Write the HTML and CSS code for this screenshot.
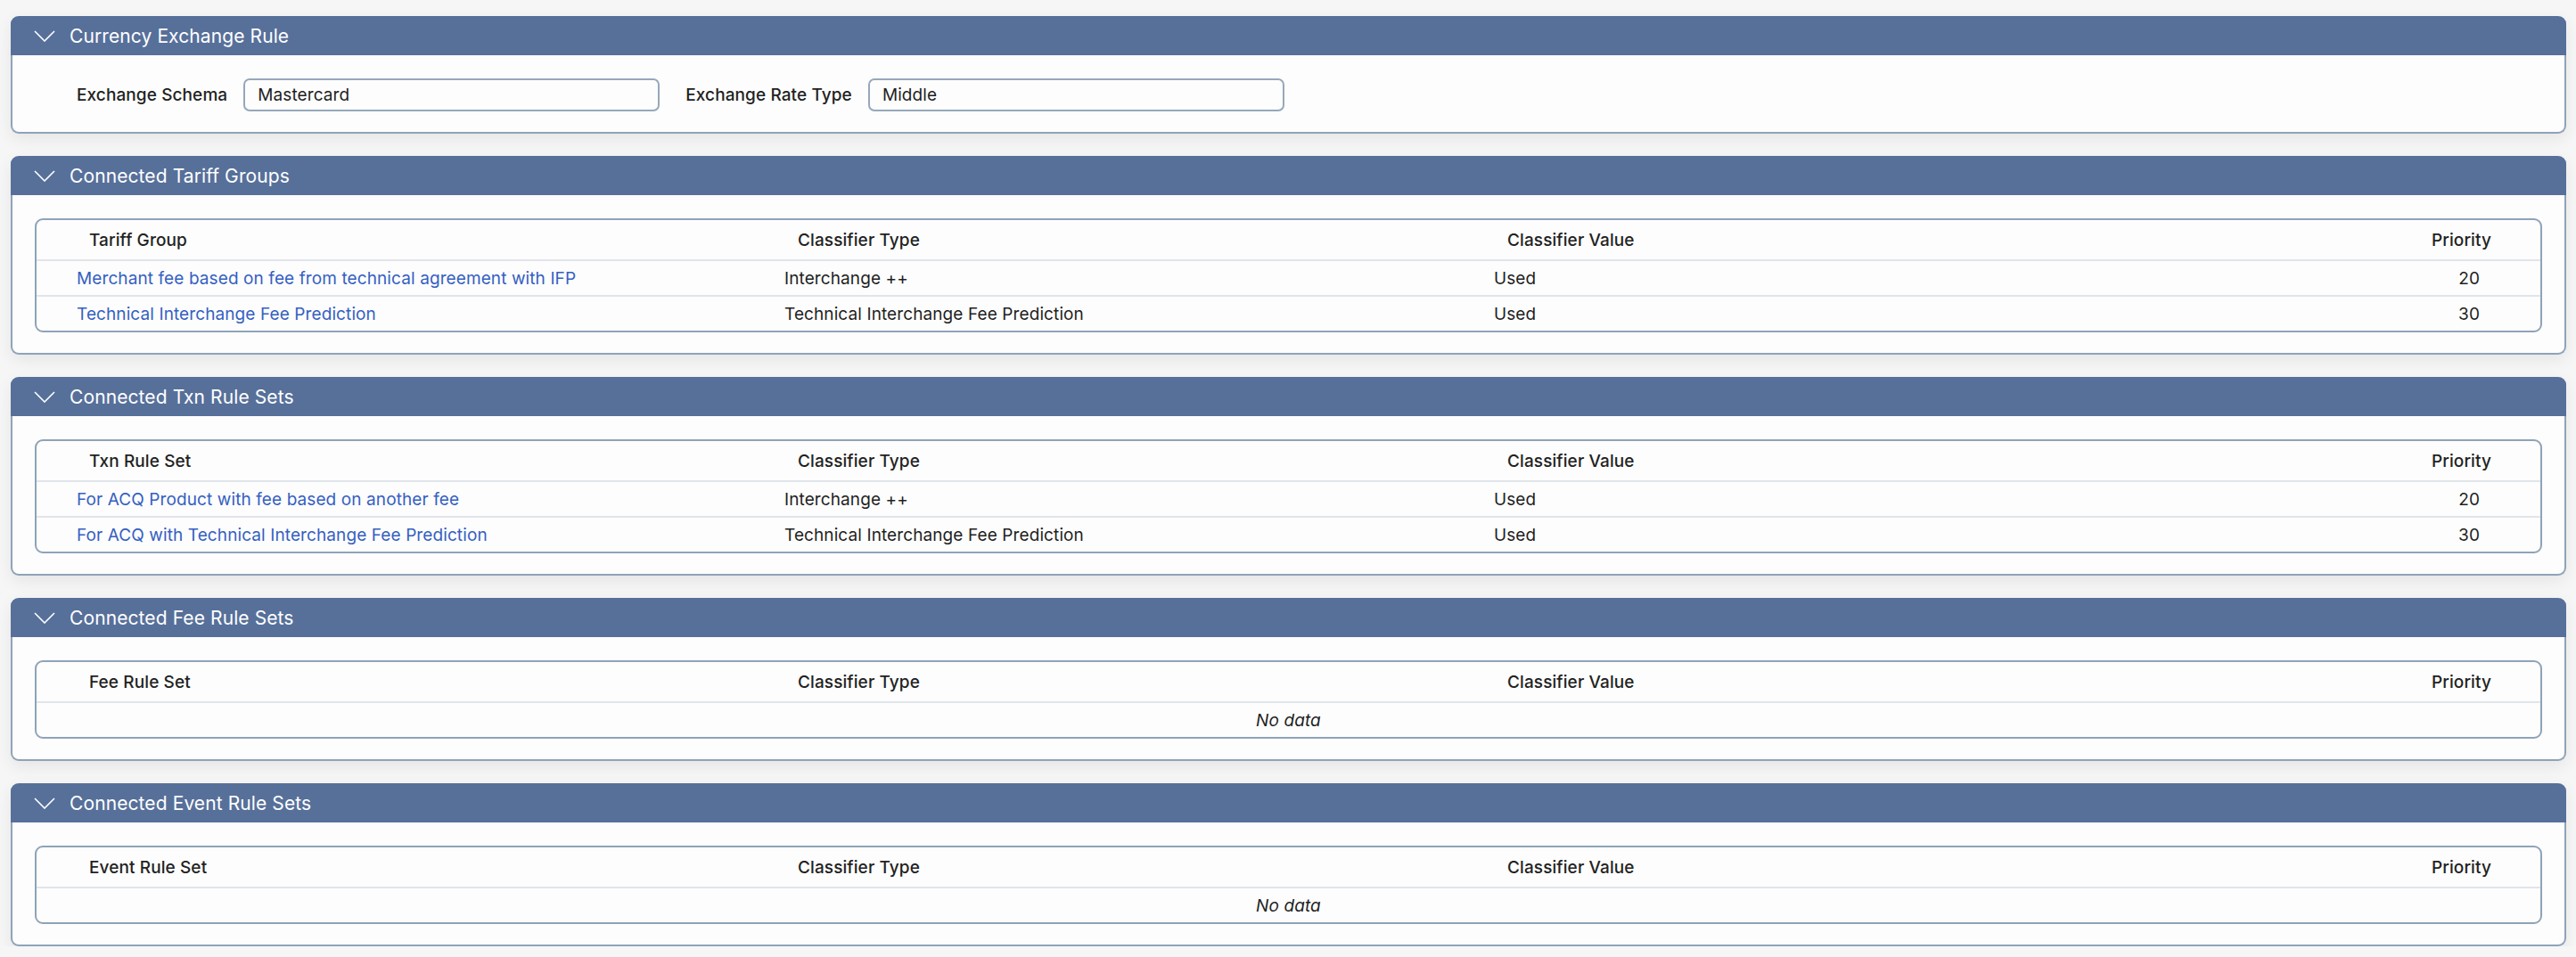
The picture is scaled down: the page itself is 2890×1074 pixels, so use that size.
FILE: index.html
```html
<!DOCTYPE html>
<html lang="en">
  <head>
    <meta charset="UTF-8" />
    <meta name="viewport" content="width=device-width, initial-scale=1.0" />
    <title>Exchange rule</title>
    <link rel="stylesheet" href="styles.css">
  </head>
  <body>
    <main>
      <section class="panel">
        <header class="panel-head">
          <svg class="chevron" viewBox="0 0 24 13"><polyline points="1,1 12,12 23,1" /></svg>
          <span>Currency Exchange Rule</span>
        </header>
        <div class="panel-body">
          <div class="form-row">
            <div class="field">
              <label for="schema">Exchange Schema</label>
              <input type="text" id="schema" value="Mastercard" />
            </div>
            <div class="field">
              <label for="rate">Exchange Rate Type</label>
              <input type="text" id="rate" value="Middle" />
            </div>
          </div>
        </div>
      </section>

      <section class="panel">
        <header class="panel-head">
          <svg class="chevron" viewBox="0 0 24 13"><polyline points="1,1 12,12 23,1" /></svg>
          <span>Connected Tariff Groups</span>
        </header>
        <div class="panel-body">
          <div class="grid">
            <table>
              <thead>
                <tr>
                  <th>Tariff Group</th>
                  <th>Classifier Type</th>
                  <th>Classifier Value</th>
                  <th class="num">Priority</th>
                </tr>
              </thead>
              <tbody>
                <tr>
                  <td><a href="#">Merchant fee based on fee from technical agreement with IFP</a></td>
                  <td>Interchange ++</td>
                  <td>Used</td>
                  <td class="num">20</td>
                </tr>
                <tr>
                  <td><a href="#">Technical Interchange Fee Prediction</a></td>
                  <td>Technical Interchange Fee Prediction</td>
                  <td>Used</td>
                  <td class="num">30</td>
                </tr>
              </tbody>
            </table>
          </div>
        </div>
      </section>

      <section class="panel">
        <header class="panel-head">
          <svg class="chevron" viewBox="0 0 24 13"><polyline points="1,1 12,12 23,1" /></svg>
          <span>Connected Txn Rule Sets</span>
        </header>
        <div class="panel-body">
          <div class="grid">
            <table>
              <thead>
                <tr>
                  <th>Txn Rule Set</th>
                  <th>Classifier Type</th>
                  <th>Classifier Value</th>
                  <th class="num">Priority</th>
                </tr>
              </thead>
              <tbody>
                <tr>
                  <td><a href="#">For ACQ Product with fee based on another fee</a></td>
                  <td>Interchange ++</td>
                  <td>Used</td>
                  <td class="num">20</td>
                </tr>
                <tr>
                  <td><a href="#">For ACQ with Technical Interchange Fee Prediction</a></td>
                  <td>Technical Interchange Fee Prediction</td>
                  <td>Used</td>
                  <td class="num">30</td>
                </tr>
              </tbody>
            </table>
          </div>
        </div>
      </section>

      <section class="panel">
        <header class="panel-head">
          <svg class="chevron" viewBox="0 0 24 13"><polyline points="1,1 12,12 23,1" /></svg>
          <span>Connected Fee Rule Sets</span>
        </header>
        <div class="panel-body">
          <div class="grid">
            <table>
              <thead>
                <tr>
                  <th>Fee Rule Set</th>
                  <th>Classifier Type</th>
                  <th>Classifier Value</th>
                  <th class="num">Priority</th>
                </tr>
              </thead>
              <tbody>
                <tr>
                  <td class="empty" colspan="4">No data</td>
                </tr>
              </tbody>
            </table>
          </div>
        </div>
      </section>

      <section class="panel">
        <header class="panel-head">
          <svg class="chevron" viewBox="0 0 24 13"><polyline points="1,1 12,12 23,1" /></svg>
          <span>Connected Event Rule Sets</span>
        </header>
        <div class="panel-body">
          <div class="grid">
            <table>
              <thead>
                <tr>
                  <th>Event Rule Set</th>
                  <th>Classifier Type</th>
                  <th>Classifier Value</th>
                  <th class="num">Priority</th>
                </tr>
              </thead>
              <tbody>
                <tr>
                  <td class="empty" colspan="4">No data</td>
                </tr>
              </tbody>
            </table>
          </div>
        </div>
      </section>
    </main>
  </body>
</html>
```

FILE: styles.css
```css
body {
  margin: 0;
  padding: 18px 11px 0 12px;
  background-color: #f6f6f6;
  font-family: Inter, Roboto, "Liberation Sans", sans-serif;
  font-size: 19px;
  letter-spacing: 0.1px;
  color: #1f1f1f;
}
main {
  display: flex;
  flex-direction: column;
  gap: 25px;
}
.panel {
  background-color: #fdfdfd;
  border: 2px solid #8fa3b8;
  border-top: none;
  border-radius: 9px;
  box-shadow: 0px 6px 18px rgba(0, 0, 0, 0.07);
}
.panel-head {
  height: 44px;
  margin: 0 -2px;
  padding-left: 26px;
  display: flex;
  align-items: center;
  gap: 16px;
  background-color: #57709a;
  border-radius: 9px 9px 0 0;
  color: #ffffff;
  font-size: 21px;
}
.chevron {
  width: 24px;
  height: 13px;
  fill: none;
  stroke: #ffffff;
  stroke-width: 1.6;
}
.panel-body {
  padding: 26px 25px 23px 25px;
}

/* form */
.form-row {
  display: flex;
  padding-left: 47px;
  gap: 29px;
}
.field {
  display: flex;
  align-items: center;
  gap: 18px;
}
.field label {
  font-weight: 500;
  color: #222;
}
.field input {
  width: 467px;
  height: 37px;
  box-sizing: border-box;
  border: 2px solid #95a8bb;
  border-radius: 7px;
  padding: 0 14px;
  background-color: #fdfdfd;
  font-family: inherit;
  font-size: 19px;
  letter-spacing: 0.1px;
  color: #1f1f1f;
}

/* tables */
.grid {
  border: 2px solid #8fa3b8;
  border-radius: 9px;
  overflow: hidden;
}
table {
  width: 100%;
  border-collapse: collapse;
  table-layout: fixed;
}
th {
  height: 45px;
  box-sizing: border-box;
  text-align: left;
  font-weight: 500;
  color: #222;
  border-bottom: 2px solid #e0e5ea;
  padding: 0 16px 0 32px;
}
td {
  height: 38px;
  padding: 0 16px;
  border-bottom: 2px solid #e0e5ea;
}
tbody tr:last-child td {
  border-bottom: none;
}
th:nth-child(1) {
  width: 823px;
  padding-left: 59px;
}
td:nth-child(1) {
  padding-left: 45px;
}
th:nth-child(2),
th:nth-child(3) {
  width: 796px;
  padding-left: 31px;
}
th.num {
  text-align: right;
  padding-right: 55px;
}
td.num {
  text-align: right;
  padding-right: 68px;
}
td.empty {
  text-align: center;
  font-style: italic;
  padding: 0;
}
a {
  color: #3560c2;
  text-decoration: none;
}
```
